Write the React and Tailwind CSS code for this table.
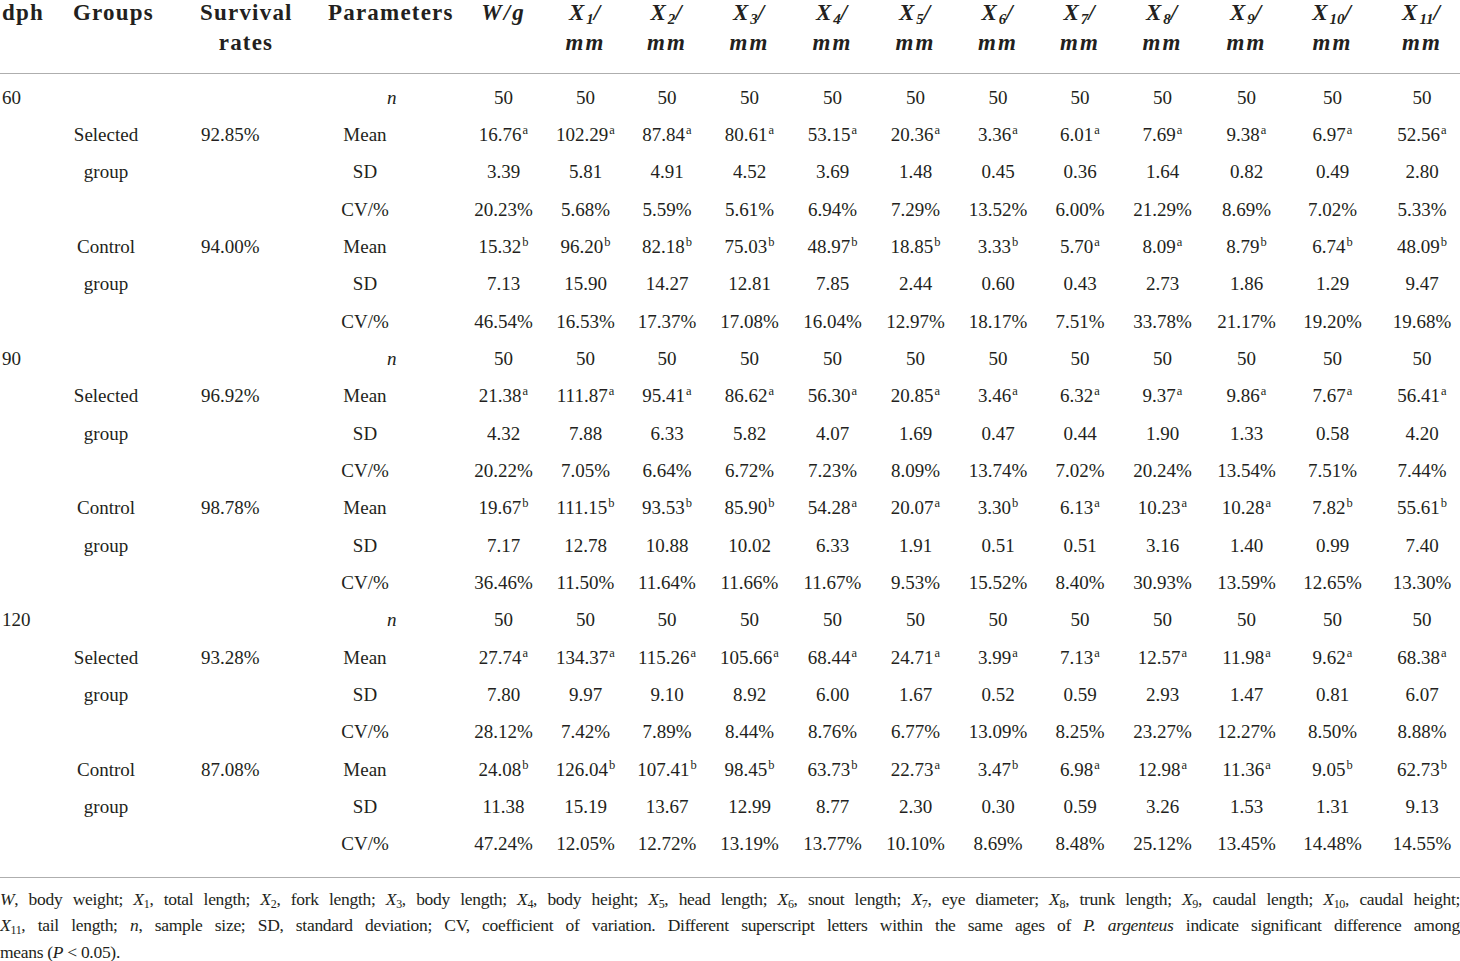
const COLS =
  "grid grid-cols-[73px_127px_128px_134px_83px_81px_82px_83px_83px_83px_82px_82px_83px_85px_87px_84px]";

const blocks = [
  {
    dph: "60",
    groups: [
      {
        name: "Selected",
        rate: "92.85%",
        mean: ["16.76a", "102.29a", "87.84a", "80.61a", "53.15a", "20.36a", "3.36a", "6.01a", "7.69a", "9.38a", "6.97a", "52.56a"],
        sd: ["3.39", "5.81", "4.91", "4.52", "3.69", "1.48", "0.45", "0.36", "1.64", "0.82", "0.49", "2.80"],
        cv: ["20.23%", "5.68%", "5.59%", "5.61%", "6.94%", "7.29%", "13.52%", "6.00%", "21.29%", "8.69%", "7.02%", "5.33%"],
      },
      {
        name: "Control",
        rate: "94.00%",
        mean: ["15.32b", "96.20b", "82.18b", "75.03b", "48.97b", "18.85b", "3.33b", "5.70a", "8.09a", "8.79b", "6.74b", "48.09b"],
        sd: ["7.13", "15.90", "14.27", "12.81", "7.85", "2.44", "0.60", "0.43", "2.73", "1.86", "1.29", "9.47"],
        cv: ["46.54%", "16.53%", "17.37%", "17.08%", "16.04%", "12.97%", "18.17%", "7.51%", "33.78%", "21.17%", "19.20%", "19.68%"],
      },
    ],
  },
  {
    dph: "90",
    groups: [
      {
        name: "Selected",
        rate: "96.92%",
        mean: ["21.38a", "111.87a", "95.41a", "86.62a", "56.30a", "20.85a", "3.46a", "6.32a", "9.37a", "9.86a", "7.67a", "56.41a"],
        sd: ["4.32", "7.88", "6.33", "5.82", "4.07", "1.69", "0.47", "0.44", "1.90", "1.33", "0.58", "4.20"],
        cv: ["20.22%", "7.05%", "6.64%", "6.72%", "7.23%", "8.09%", "13.74%", "7.02%", "20.24%", "13.54%", "7.51%", "7.44%"],
      },
      {
        name: "Control",
        rate: "98.78%",
        mean: ["19.67b", "111.15b", "93.53b", "85.90b", "54.28a", "20.07a", "3.30b", "6.13a", "10.23a", "10.28a", "7.82b", "55.61b"],
        sd: ["7.17", "12.78", "10.88", "10.02", "6.33", "1.91", "0.51", "0.51", "3.16", "1.40", "0.99", "7.40"],
        cv: ["36.46%", "11.50%", "11.64%", "11.66%", "11.67%", "9.53%", "15.52%", "8.40%", "30.93%", "13.59%", "12.65%", "13.30%"],
      },
    ],
  },
  {
    dph: "120",
    groups: [
      {
        name: "Selected",
        rate: "93.28%",
        mean: ["27.74a", "134.37a", "115.26a", "105.66a", "68.44a", "24.71a", "3.99a", "7.13a", "12.57a", "11.98a", "9.62a", "68.38a"],
        sd: ["7.80", "9.97", "9.10", "8.92", "6.00", "1.67", "0.52", "0.59", "2.93", "1.47", "0.81", "6.07"],
        cv: ["28.12%", "7.42%", "7.89%", "8.44%", "8.76%", "6.77%", "13.09%", "8.25%", "23.27%", "12.27%", "8.50%", "8.88%"],
      },
      {
        name: "Control",
        rate: "87.08%",
        mean: ["24.08b", "126.04b", "107.41b", "98.45b", "63.73b", "22.73a", "3.47b", "6.98a", "12.98a", "11.36a", "9.05b", "62.73b"],
        sd: ["11.38", "15.19", "13.67", "12.99", "8.77", "2.30", "0.30", "0.59", "3.26", "1.53", "1.31", "9.13"],
        cv: ["47.24%", "12.05%", "12.72%", "13.19%", "13.77%", "10.10%", "8.69%", "8.48%", "25.12%", "13.45%", "14.48%", "14.55%"],
      },
    ],
  },
];

const fifties = Array(12).fill("50");

function Val({ v }) {
  const m = v.match(/^(.*?)([ab])$/);
  if (!m) return v;
  return (
    <>
      {m[1]}
      <sup className="text-[12.5px] top-[-7px] ml-[1px]">{m[2]}</sup>
    </>
  );
}

function Row({ dph, group, rate, param, vals }) {
  return (
    <div className={`${COLS} h-[37.35px] leading-[37.35px]`}>
      <div className="pl-[2px]">{dph}</div>
      <div>
        <div className="w-[66px] text-center">{group}</div>
      </div>
      <div className="pl-px">{rate}</div>
      {param === "n" ? (
        <div className="pl-[59px] italic">n</div>
      ) : (
        <div>
          <div className="w-[74px] text-center">{param}</div>
        </div>
      )}
      {vals.map((v, i) => (
        <div key={i} className={`text-center whitespace-nowrap ${i === 11 ? "pl-[8px]" : ""}`}>
          <Val v={v} />
        </div>
      ))}
    </div>
  );
}

// header cells: first line box starts at the top edge, second sits ~30px lower
function XHead({ n }) {
  return (
    <div className="text-center italic tracking-[2px]">
      <div className="leading-[25.5px]">
        X<sub className="text-[15px] tracking-normal">{n}</sub>/
      </div>
      <div className="leading-[34px]">mm</div>
    </div>
  );
}

function X({ n }) {
  return (
    <>
      <i>X</i>
      <sub className="text-[12px]">{n}</sub>
    </>
  );
}

export default function App() {
  return (
    <div className="w-[1460px] h-[961px] overflow-hidden bg-white text-[#231f20] font-['Liberation_Serif',serif]">
      <div className={`${COLS} h-[73px] font-bold text-[23px] leading-[25.5px]`}>
        <div className="pl-[2px] tracking-[1.2px]">dph</div>
        <div className="tracking-[1.2px]">Groups</div>
        <div>
          <div className="w-[92px] text-center tracking-[1.2px]">
            <div>Survival</div>
            <div className="leading-[34px]">rates</div>
          </div>
        </div>
        <div className="tracking-[1.2px]">Parameters</div>
        <div className="text-center italic tracking-[2px]">W/g</div>
        {[1, 2, 3, 4, 5, 6, 7, 8, 9, 10].map((n) => (
          <XHead key={n} n={n} />
        ))}
        <div className="pl-[8px]">
          <XHead n={11} />
        </div>
      </div>
      <div className="h-px bg-[#aeaeae]" />

      <div className="pt-[4.5px] text-[19px]">
        {blocks.map((b) => (
          <div key={b.dph}>
            <Row dph={b.dph} param="n" vals={fifties} />
            {b.groups.map((g) => (
              <div key={g.name}>
                <Row group={g.name} rate={g.rate} param="Mean" vals={g.mean} />
                <Row group="group" param="SD" vals={g.sd} />
                <Row param="CV/%" vals={g.cv} />
              </div>
            ))}
          </div>
        ))}
      </div>

      <div className="mt-[14px] h-px bg-[#aeaeae]" />

      <div className="pt-[8px] text-[17.5px] leading-[26.5px] tracking-[-0.3px]">
        <div className="text-justify [text-align-last:justify]">
          <i>W</i>, body weight; <X n="1" />, total length; <X n="2" />, fork length; <X n="3" />, body length;{" "}
          <X n="4" />, body height; <X n="5" />, head length; <X n="6" />, snout length; <X n="7" />, eye diameter;{" "}
          <X n="8" />, trunk length; <X n="9" />, caudal length; <X n="10" />, caudal height;
        </div>
        <div className="text-justify [text-align-last:justify]">
          <X n="11" />, tail length; <i>n</i>, sample size; SD, standard deviation; CV, coefficient of variation.
          Different superscript letters within the same ages of <i>P. argenteus</i> indicate significant difference
          among
        </div>
        <div>
          means (<i>P</i> &lt; 0.05).
        </div>
      </div>
    </div>
  );
}
